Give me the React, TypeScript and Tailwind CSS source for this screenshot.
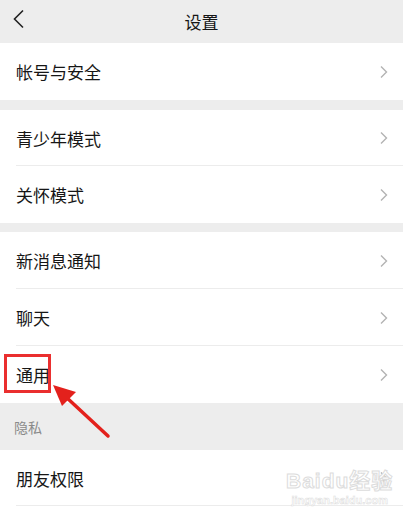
import React from "react";

const Chevron = () => (
  <svg width="10" height="14" viewBox="0 0 10 14" className="shrink-0">
    <path d="M2 1.5 L7.5 7 L2 12.5" fill="none" stroke="#b3b3b3" strokeWidth="1.4" />
  </svg>
);

const Row = ({ label, h = "h-[57px]", divider = false }: { label: string; h?: string; divider?: boolean }) => (
  <div className={`relative flex items-center bg-white pl-[16px] pr-[14px] ${h}`}>
    <span className="flex-1 text-[17px] text-[#161616] leading-none">{label}</span>
    <Chevron />
    {divider && <div className="absolute bottom-0 left-[16px] right-0 h-px bg-[#ececec]" />}
  </div>
);

export default function App() {
  return (
    <div
      className="relative w-[403px] h-[520px] overflow-hidden bg-[#ededed]"
      style={{ fontFamily: '"Noto Sans CJK SC", "Noto Sans", sans-serif' }}
    >
      <div className="relative flex h-[43px] items-center justify-center bg-[#ededed]">
        <svg width="14" height="20" viewBox="0 0 14 20" className="absolute left-[12px] top-[9px]">
          <path d="M11 1.5 L2.5 10 L11 18.5" fill="none" stroke="#222" strokeWidth="1.6" />
        </svg>
        <span className="text-[17px] text-[#161616]">设置</span>
      </div>
      <Row label="帐号与安全" />
      <div className="h-[10px]" />
      <Row label="青少年模式" h="h-[56px]" divider />
      <Row label="关怀模式" />
      <div className="h-[9px]" />
      <Row label="新消息通知" divider />
      <Row label="聊天" divider />
      <Row label="通用" />
      <div className="flex h-[47px] items-center pl-[14px] pt-[2px]">
        <span className="text-[14px] text-[#8a8a8a]">隐私</span>
      </div>
      <Row label="朋友权限" h="h-[56px]" divider />
      <div className="h-[20px] bg-white" />

      {/* red highlight box */}
      <div className="absolute left-[4px] top-[354px] h-[39px] w-[47px] border-[3px] border-[#ea2f2f]" />
      {/* red arrow */}
      <svg className="absolute left-0 top-0" width="403" height="520" viewBox="0 0 403 520">
        <line x1="108" y1="436" x2="66" y2="397" stroke="#e3211c" strokeWidth="3.5" strokeLinecap="round" />
        <polygon points="53,385 76,392 62,406" fill="#e3211c" />
      </svg>

      {/* watermark */}
      <div className="absolute left-[286px] top-[470px] flex flex-col items-center leading-none text-white [-webkit-text-stroke:1px_#dcdcdc]">
        <span className="text-[21px] font-bold tracking-[1px]" style={{ fontFamily: '"Liberation Sans", "Noto Sans CJK SC", sans-serif' }}>
          Baidu经验
        </span>
        <span className="mt-[4px] text-[11px] font-bold [-webkit-text-stroke:0.5px_#dcdcdc]" style={{ fontFamily: '"Liberation Sans", sans-serif' }}>
          jingyan.baidu.com
        </span>
      </div>
    </div>
  );
}
